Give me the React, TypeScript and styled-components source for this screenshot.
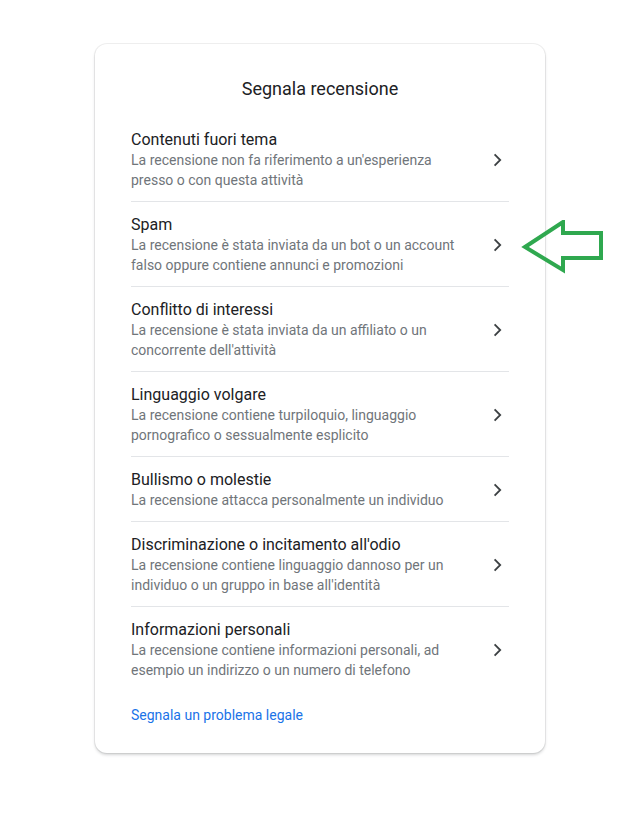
import React from 'react';
import styled, { createGlobalStyle } from 'styled-components';

interface ReportReason {
	title: string;
	description: string;
}

const reasons: ReportReason[] = [
	{ title: "Contenuti fuori tema", description: "La recensione non fa riferimento a un'esperienza presso o con questa attività" },
	{ title: "Spam", description: "La recensione è stata inviata da un bot o un account falso oppure contiene annunci e promozioni" },
	{ title: "Conflitto di interessi", description: "La recensione è stata inviata da un affiliato o un concorrente dell'attività" },
	{ title: "Linguaggio volgare", description: "La recensione contiene turpiloquio, linguaggio pornografico o sessualmente esplicito" },
	{ title: "Bullismo o molestie", description: "La recensione attacca personalmente un individuo" },
	{ title: "Discriminazione o incitamento all'odio", description: "La recensione contiene linguaggio dannoso per un individuo o un gruppo in base all'identità" },
	{ title: "Informazioni personali", description: "La recensione contiene informazioni personali, ad esempio un indirizzo o un numero di telefono" },
];

const Chevron: React.FC = () => (
	<ChevronIcon viewBox="0 0 24 24">
		<polyline points="9.6,6.4 15.2,12 9.6,17.6" />
	</ChevronIcon>
);

const App: React.FC = () => (
	<Page>
		<GlobalStyle />
		<Card>
			<CardTitle>Segnala recensione</CardTitle>
			<ReasonList>
				{reasons.map((reason, idx) => (
					<ReasonRow key={idx} $last={idx === reasons.length - 1}>
						<ReasonText>
							<ReasonTitle>{reason.title}</ReasonTitle>
							<ReasonDescription>{reason.description}</ReasonDescription>
						</ReasonText>
						<Chevron />
					</ReasonRow>
				))}
			</ReasonList>
			<LegalLink href="#">Segnala un problema legale</LegalLink>
		</Card>
		<Annotation viewBox="0 0 90 60">
			<polygon points="5,27 43,2 43,13 81,13 81,38 43,38 43,50" />
		</Annotation>
	</Page>
);

const GlobalStyle = createGlobalStyle`
	body {
		margin: 0;
		background: #fff;
		font-family: Roboto, 'Liberation Sans', Arial, sans-serif;
	}
`;

const Page = styled.div`
	position: relative;
	padding: 44px 0 60px 95px;
`;

const Card = styled.div`
	width: 450px;
	box-sizing: border-box;
	padding: 33px 36px 28px;
	border-radius: 12px;
	background: #fff;
	box-shadow: 0 0 0 1px rgba(60, 64, 67, 0.08), 0 2px 3px rgba(60, 64, 67, 0.22);
	display: flex;
	flex-direction: column;
`;

const CardTitle = styled.div`
	font-size: 18px;
	line-height: 24px;
	color: #202124;
	text-align: center;
	margin-bottom: 16px;
`;

const ReasonList = styled.div`
	display: flex;
	flex-direction: column;
`;

const ReasonRow = styled.div<{ $last: boolean }>`
	display: flex;
	align-items: center;
	padding: 13px 0 11px;
	border-bottom: ${(p) => (p.$last ? 'none' : '1px solid #e3e5e8')};
	cursor: pointer;
`;

const ReasonText = styled.div`
	flex: 1;
	max-width: 336px;
	margin-right: auto;
`;

const ReasonTitle = styled.div`
	font-size: 16px;
	line-height: 20px;
	color: #202124;
`;

const ReasonDescription = styled.div`
	font-size: 14px;
	line-height: 20px;
	color: #70757a;
`;

const ChevronIcon = styled.svg`
	width: 24px;
	height: 24px;
	flex-shrink: 0;
	fill: none;
	stroke: #3c4043;
	stroke-width: 1.8;
`;

const LegalLink = styled.a`
	margin-top: 14px;
	font-size: 14px;
	line-height: 20px;
	color: #1a73e8;
	text-decoration: none;
	align-self: flex-start;
`;

const Annotation = styled.svg`
	position: absolute;
	left: 520px;
	top: 220px;
	width: 90px;
	height: 60px;
	fill: none;
	stroke: #2fa84f;
	stroke-width: 4;
	stroke-linejoin: miter;
`;

export default App;
